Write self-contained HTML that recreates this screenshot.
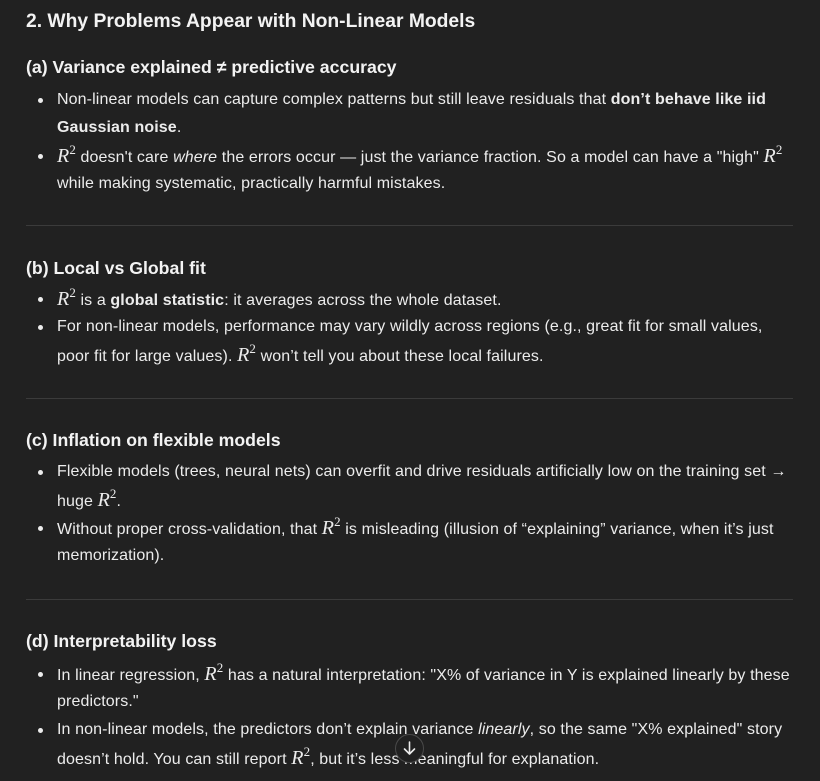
<!DOCTYPE html>
<html><head><meta charset="utf-8"><style>
body{margin:0;background:#212121;width:820px;height:781px;overflow:hidden;position:relative;font-family:"Liberation Sans",sans-serif;color:#ececec}
.l{position:absolute;left:57px;white-space:nowrap;font-size:16px;line-height:28px;letter-spacing:0.11px}
.d{position:absolute;left:38px;width:5px;height:5px;border-radius:50%;background:#ececec}
h2,h3{position:absolute;left:26px;margin:0;white-space:nowrap;font-weight:bold;color:#f3f3f3}
h2{font-size:19.3px;line-height:28px}
h3{font-size:17.7px;line-height:26px}
hr{position:absolute;left:26px;width:767px;margin:0;border:0;border-top:1px solid #3b3b3b}
.r{font-family:"Liberation Serif",serif;font-style:italic;font-size:20px}
.r sup{font-style:normal;font-size:13px;vertical-align:8px;line-height:0}
b{font-weight:bold}
.btn{position:absolute;left:395px;top:734px;width:29px;height:29px;border-radius:50%;border:1px solid #4a4a4a;background:#212121;box-sizing:border-box}
</style></head><body>
<h2 style="top:8px">2. Why Problems Appear with Non-Linear Models</h2>
<h3 style="top:54px">(a) Variance explained ≠ predictive accuracy</h3>
<div class="d" style="top:98px"></div>
<div class="l" style="top:86px">Non-linear models can capture complex patterns but still leave residuals that <b>don’t behave like iid</b></div>
<div class="l" style="top:114px"><b>Gaussian noise</b>.</div>
<div class="d" style="top:154px"></div>
<div class="l" style="top:142px"><span class="r">R<sup>2</sup></span> doesn't care <i>where</i> the errors occur — just the variance fraction. So a model can have a "high" <span class="r">R<sup>2</sup></span></div>
<div class="l" style="top:170px">while making systematic, practically harmful mistakes.</div>
<hr style="top:225px">
<h3 style="top:255px">(b) Local vs Global fit</h3>
<div class="d" style="top:297px"></div>
<div class="l" style="top:285px"><span class="r">R<sup>2</sup></span> is a <b>global statistic</b>: it averages across the whole dataset.</div>
<div class="d" style="top:325px"></div>
<div class="l" style="top:313px">For non-linear models, performance may vary wildly across regions (e.g., great fit for small values,</div>
<div class="l" style="top:341px">poor fit for large values). <span class="r">R<sup>2</sup></span> won’t tell you about these local failures.</div>
<hr style="top:398px">
<h3 style="top:427px">(c) Inflation on flexible models</h3>
<div class="d" style="top:470px"></div>
<div class="l" style="top:458px">Flexible models (trees, neural nets) can overfit and drive residuals artificially low on the training set →</div>
<div class="l" style="top:486px">huge <span class="r">R<sup>2</sup></span>.</div>
<div class="d" style="top:526px"></div>
<div class="l" style="top:514px">Without proper cross-validation, that <span class="r">R<sup>2</sup></span> is misleading (illusion of “explaining” variance, when it’s just</div>
<div class="l" style="top:542px">memorization).</div>
<hr style="top:599px">
<h3 style="top:628px">(d) Interpretability loss</h3>
<div class="d" style="top:672px"></div>
<div class="l" style="top:660px">In linear regression, <span class="r">R<sup>2</sup></span> has a natural interpretation: "X% of variance in Y is explained linearly by these</div>
<div class="l" style="top:688px">predictors."</div>
<div class="d" style="top:728px"></div>
<div class="l" style="top:716px">In non-linear models, the predictors don’t explain variance <i>linearly</i>, so the same "X% explained" story</div>
<div class="l" style="top:744px">doesn’t hold. You can still report <span class="r">R<sup>2</sup></span>, but it’s less meaningful for explanation.</div>
<div class="btn"><svg width="27" height="27" viewBox="0 0 27 27"><path d="M13.5 7v12M8.5 14l5 5 5-5" fill="none" stroke="#ececec" stroke-width="1.6" stroke-linecap="round" stroke-linejoin="round"/></svg></div>
</body></html>
